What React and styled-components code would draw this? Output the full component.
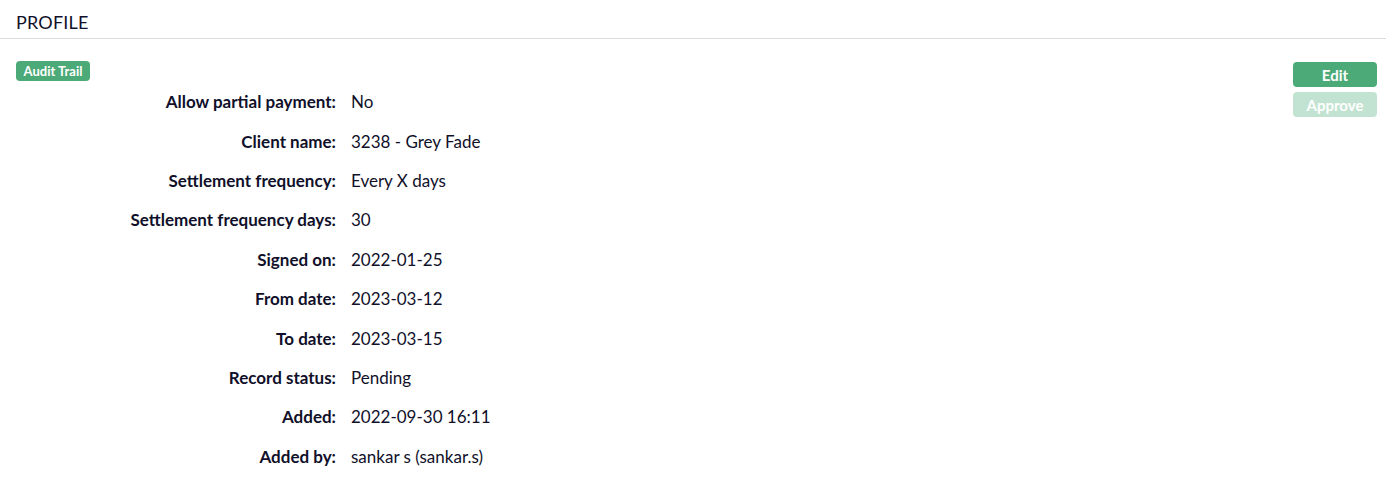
import React from "react";
import styled, { createGlobalStyle } from "styled-components";

const Global = createGlobalStyle`
  html, body { margin: 0; padding: 0; background: #fff; }
  body { font-family: Lato, "Open Sans", sans-serif; color: #10102a; }
`;

const Header = styled.div`
  height: 39px;
  box-sizing: border-box;
  border-bottom: 1px solid #dcdcdc;
  display: flex;
  align-items: center;
  padding: 6px 16px 0;
  font-size: 18px;
  font-weight: 400;
  letter-spacing: 0.2px;
  color: #10102a;
`;

const Body = styled.div`
  display: flex;
  justify-content: space-between;
  padding: 22px 9px 0 16px;
`;

const Main = styled.div`
  display: flex;
  flex-direction: column;
  align-items: flex-start;
`;

const Badge = styled.button`
  border: none;
  background: #4caa79;
  color: #fff;
  font-family: inherit;
  font-weight: 700;
  font-size: 13px;
  height: 20px;
  width: 74px;
  border-radius: 4px;
  padding: 0;
  cursor: pointer;
`;

const Grid = styled.div`
  display: grid;
  grid-template-columns: 320px auto;
  column-gap: 15px;
  grid-auto-rows: 39.4px;
  align-items: center;
  font-size: 17px;
  margin-top: 1px;
`;

const Label = styled.div`
  text-align: right;
  font-weight: 700;
  color: #10102a;
`;

const Value = styled.div`
  font-weight: 400;
  color: #10102a;
`;

const Side = styled.div`
  display: flex;
  flex-direction: column;
  gap: 5px;
  padding-top: 1px;
`;

const ActionButton = styled.button`
  border: none;
  width: 84px;
  height: 25px;
  border-radius: 4px;
  background: ${(p) => (p.$disabled ? "#c2e3d1" : "#4caa79")};
  color: #fff;
  font-family: inherit;
  font-weight: 700;
  font-size: 15px;
  padding: 0;
  cursor: ${(p) => (p.$disabled ? "default" : "pointer")};
`;

const rows = [
  ["Allow partial payment:", "No"],
  ["Client name:", "3238 - Grey Fade"],
  ["Settlement frequency:", "Every X days"],
  ["Settlement frequency days:", "30"],
  ["Signed on:", "2022-01-25"],
  ["From date:", "2023-03-12"],
  ["To date:", "2023-03-15"],
  ["Record status:", "Pending"],
  ["Added:", "2022-09-30 16:11"],
  ["Added by:", "sankar s (sankar.s)"],
];

export default function App() {
  return (
    <>
      <Global />
      <Header>PROFILE</Header>
      <Body>
        <Main>
          <Badge>Audit Trail</Badge>
          <Grid>
            {rows.map(([l, v]) => (
              <React.Fragment key={l}>
                <Label>{l}</Label>
                <Value>{v}</Value>
              </React.Fragment>
            ))}
          </Grid>
        </Main>
        <Side>
          <ActionButton>Edit</ActionButton>
          <ActionButton $disabled>Approve</ActionButton>
        </Side>
      </Body>
    </>
  );
}
